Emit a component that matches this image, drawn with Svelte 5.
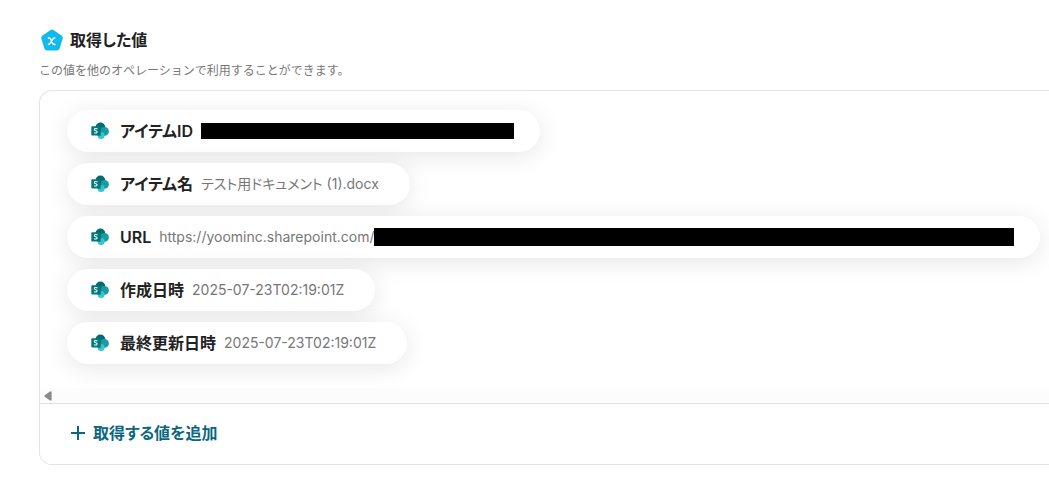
<script lang="ts">
  interface Item {
    label: string;
    value: string;
    mask?: 'short' | 'long';
  }

  const items: Item[] = [
    { label: 'アイテムID', value: '', mask: 'short' },
    { label: 'アイテム名', value: 'テスト用ドキュメント (1).docx' },
    { label: 'URL', value: 'https://yoominc.sharepoint.com/', mask: 'long' },
    { label: '作成日時', value: '2025-07-23T02:19:01Z' },
    { label: '最終更新日時', value: '2025-07-23T02:19:01Z' }
  ];
</script>

<main>
  <header>
    <h2>
      <svg class="badge" viewBox="0 0 22 22" aria-hidden="true">
        <path
          d="M9.6 .9Q11 0 12.4 .9L20.8 6.8Q22.2 7.9 21.7 9.5L18.5 19.7Q17.9 21.5 16 21.5H6Q4.1 21.5 3.5 19.7L.3 9.5Q-.2 7.9 1.2 6.8Z"
          fill="#12b9ed"
        />
        <path
          d="M6.8 9.1H8.1C9.1 9.1 9.5 9.7 10 10.8L11.4 14C11.9 15.1 12.3 15.6 13.3 15.6H14.5M14.3 9H13.7C12.7 9 12.1 9.6 11.4 10.7L9.4 13.8C8.6 15.1 8.1 15.6 7.2 15.6H6.8"
          fill="none"
          stroke="#fff"
          stroke-width="1.5"
        />
      </svg>
      取得した値
    </h2>
    <p>この値を他のオペレーションで利用することができます。</p>
  </header>

  <section class="panel">
    <div class="scroller">
      <ul>
        {#each items as item}
          <li class="chip">
            <svg class="icon" viewBox="0 0 18 18" aria-hidden="true">
              <circle cx="9.4" cy="5.5" r="4.9" fill="#036c70" />
              <circle cx="13.4" cy="9.4" r="4.5" fill="#1a9ba1" />
              <circle cx="10.1" cy="13.6" r="3.5" fill="#37c6d0" />
              <path d="M5 4.4h5.2v9.4H6.6L5 12z" fill="#024b50" opacity=".4" />
              <rect x=".3" y="4.3" width="9" height="9.2" rx=".8" fill="#03787c" />
              <path
                d="M6.5 6.9Q4.9 6.1 3.8 6.7Q2.9 7.4 3.7 8.2L5.6 9.1Q6.5 9.9 5.7 10.7Q4.6 11.4 3.1 10.7"
                fill="none"
                stroke="#fff"
                stroke-width="1.1"
              />
            </svg>
            <span class="label">{item.label}</span>
            <span class="value">
              {item.value}{#if item.mask}<span class="mask {item.mask}"></span>{/if}
            </span>
          </li>
        {/each}
      </ul>
    </div>

    <div class="scrollbar" aria-hidden="true">
      <svg viewBox="0 0 8 10"><path d="M7.6.4v9.2L6 9.4.7 5.8Q0 5 .7 4.2L6 .6z" fill="#8b8b8b" /></svg>
    </div>

    <button type="button">
      <svg viewBox="0 0 16 16" aria-hidden="true">
        <path d="M8 1v14M1 8h14" fill="none" stroke="#0b6781" stroke-width="2" />
      </svg>
      取得する値を追加
    </button>
  </section>
</main>

<style>
  :global(body) {
    margin: 0;
    background: #fff;
    overflow: hidden;
  }

  main {
    padding: 28px 0 24px 39px;
    font-family: Inter, 'Noto Sans CJK JP', sans-serif;
    font-feature-settings: 'palt';
    color: #222;
  }

  h2 {
    display: flex;
    align-items: center;
    gap: 7px;
    margin: 0;
    padding-left: 2px;
    font-size: 16px;
    font-weight: 600;
    line-height: 24px;
  }

  .badge {
    width: 22px;
    height: 22px;
  }

  p {
    margin: 9px 0 10px;
    font-size: 12px;
    font-feature-settings: normal;
    line-height: 19px;
    color: #777;
  }

  .panel {
    border: 1px solid #e3e3e3;
    border-right: 0;
    border-radius: 13px 0 0 13px;
    overflow: hidden;
  }

  .scroller {
    overflow: hidden;
  }

  ul {
    display: flex;
    flex-direction: column;
    align-items: flex-start;
    gap: 11px;
    margin: 0;
    padding: 19px 27px 24px;
    list-style: none;
  }

  .chip {
    display: flex;
    align-items: center;
    box-sizing: border-box;
    height: 42px;
    padding: 0 31px 0 24px;
    border-radius: 21px;
    background: #fff;
    box-shadow: 0 4px 24px rgba(0, 0, 0, 0.1);
    white-space: nowrap;
  }

  .icon {
    width: 18px;
    height: 18px;
    margin-right: 11px;
  }

  .label {
    margin-right: 8px;
    font-size: 16px;
    font-weight: 600;
    line-height: 24px;
  }

  .value {
    display: flex;
    align-items: center;
    font-size: 14px;
    line-height: 20px;
    color: #777;
  }

  .mask {
    margin-right: -5px;
    background: #000;
  }

  .short {
    width: 313px;
    height: 16px;
  }

  .long {
    width: 640px;
    height: 18px;
  }

  .scrollbar {
    display: flex;
    align-items: center;
    height: 15px;
    padding-left: 4px;
    border-bottom: 1px solid #e0e0e0;
    background: #fcfcfc;
  }

  .scrollbar svg {
    width: 8px;
    height: 10px;
  }

  button {
    display: flex;
    align-items: center;
    gap: 7px;
    width: 100%;
    padding: 17px 30px 19px;
    border: 0;
    background: #fff;
    font: inherit;
    font-size: 16px;
    font-weight: 600;
    font-feature-settings: inherit;
    line-height: 24px;
    color: #0b6781;
    cursor: pointer;
  }

  button svg {
    width: 16px;
    height: 16px;
  }
</style>
